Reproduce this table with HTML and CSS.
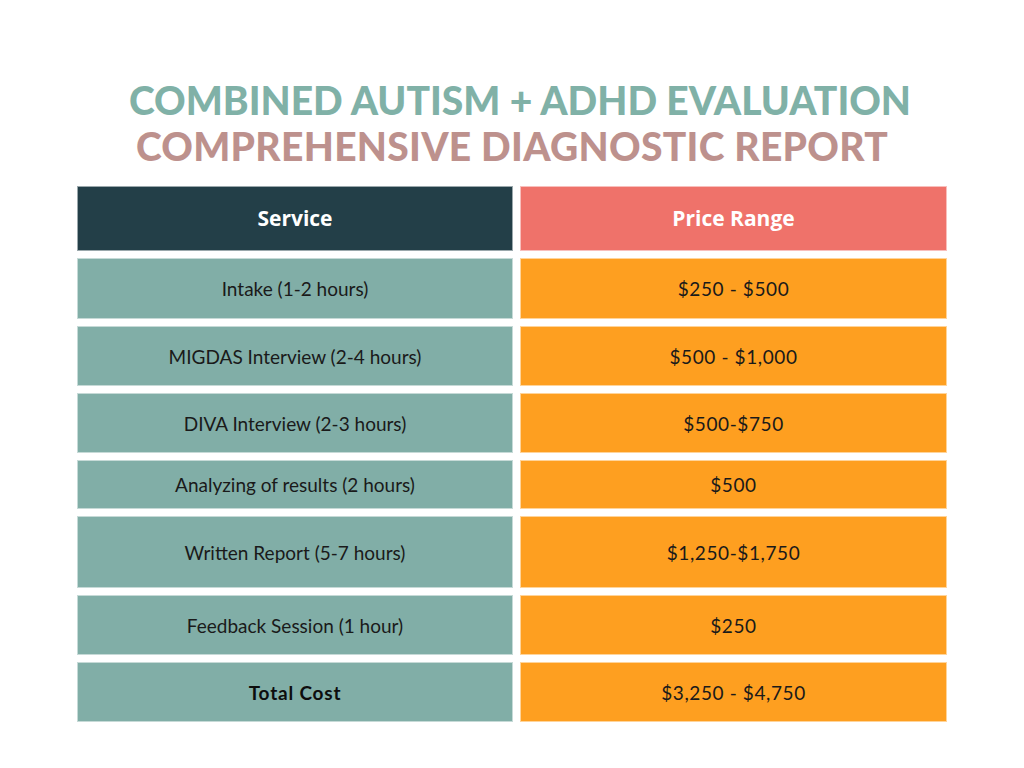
FILE: index.html
```html
<!DOCTYPE html>
<html lang="en">
<head>
<meta charset="utf-8">
<title>Combined Autism + ADHD Evaluation</title>
<link rel="stylesheet" href="styles.css">
</head>
<body>
<main class="page">
  <header class="title">
    <h1 class="title-line title-line--teal">COMBINED AUTISM + ADHD EVALUATION</h1>
    <h2 class="title-line title-line--rose">COMPREHENSIVE DIAGNOSTIC REPORT</h2>
  </header>
  <section class="table">
    <div class="cell cell--head-service row-h0">Service</div>
    <div class="cell cell--head-price row-h0">Price Range</div>

    <div class="cell cell--service row-h1">Intake (1-2 hours)</div>
    <div class="cell cell--price row-h1">$250 - $500</div>

    <div class="cell cell--service row-h2">MIGDAS Interview (2-4 hours)</div>
    <div class="cell cell--price row-h2">$500 - $1,000</div>

    <div class="cell cell--service row-h2">DIVA Interview (2-3 hours)</div>
    <div class="cell cell--price row-h2">$500-$750</div>

    <div class="cell cell--service row-h3">Analyzing of results (2 hours)</div>
    <div class="cell cell--price row-h3">$500</div>

    <div class="cell cell--service row-h4">Written Report (5-7 hours)</div>
    <div class="cell cell--price row-h4">$1,250-$1,750</div>

    <div class="cell cell--service row-h2">Feedback Session (1 hour)</div>
    <div class="cell cell--price row-h2">$250</div>

    <div class="cell cell--service cell--bold row-h2">Total Cost</div>
    <div class="cell cell--price row-h2">$3,250 - $4,750</div>
  </section>
</main>
</body>
</html>
```

FILE: styles.css
```css
html, body {
  margin: 0;
  padding: 0;
  background: #ffffff;
}

.page {
  width: 1024px;
  height: 768px;
  box-sizing: border-box;
  padding-top: 77px;
  display: flex;
  flex-direction: column;
  align-items: center;
}

.title {
  display: flex;
  flex-direction: column;
  align-items: center;
  margin-bottom: 17px;
}

.title-line {
  margin: 0;
  font-family: "Lato", "Noto Sans", sans-serif;
  font-weight: 900;
  font-size: 39px;
  line-height: 46px;
}

.title-line--teal {
  color: #80b1a7;
  padding-left: 16px;
}

.title-line--rose {
  color: #bd918d;
  letter-spacing: 0.3px;
}

.table {
  display: grid;
  grid-template-columns: 436px 427px;
  column-gap: 7px;
  row-gap: 7px;
}

.cell {
  box-sizing: border-box;
  display: flex;
  align-items: center;
  justify-content: center;
  border: 1px solid rgba(255, 255, 255, 0.55);
  font-family: "Lato", "Noto Sans", sans-serif;
  font-size: 19px;
  color: #1a1a1a;
}

.cell--head-service,
.cell--head-price {
  color: #ffffff;
  font-family: "Open Sans", "Noto Sans", sans-serif;
  font-weight: 700;
  font-size: 21px;
  padding-bottom: 1px;
}

.cell--head-service {
  background: #233f48;
}

.cell--head-price {
  background: #ef726a;
}

.cell--service {
  background: #81aea7;
}

.cell--price {
  background: #fe9f20;
  letter-spacing: 0.6px;
}

.cell--bold {
  font-weight: 700;
  color: #0d0d0d;
  letter-spacing: 0.8px;
}

.row-h0 { height: 65px; }
.row-h1 { height: 61px; }
.row-h2 { height: 60px; }
.row-h3 { height: 49px; }
.row-h4 { height: 72px; }
```
